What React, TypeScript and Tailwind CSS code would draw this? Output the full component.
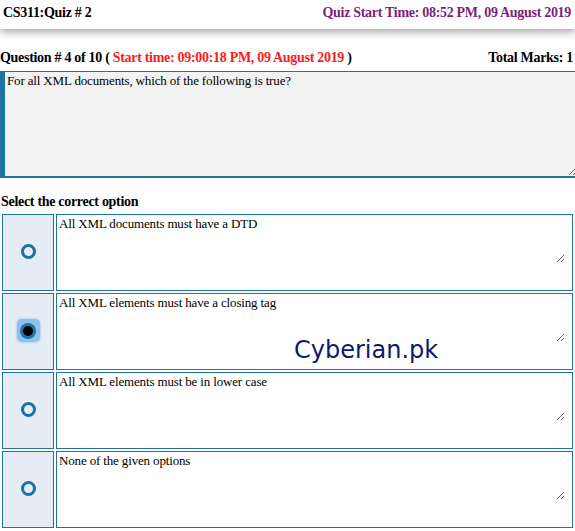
const OPTIONS = [
  "All XML documents must have a DTD",
  "All XML elements must have a closing tag",
  "All XML elements must be in lower case",
  "None of the given options",
];

const SELECTED = 1;

function Radio({ checked }: { checked: boolean }) {
  if (checked) {
    return (
      <div className="mb-[2px] flex h-[23px] w-[23px] items-center justify-center rounded-[5px] bg-[#8cc0ee] shadow-[0_0_2px_1px_#b5d6f5]">
        <div className="flex h-[16px] w-[16px] items-center justify-center rounded-full bg-[#1d74a0]">
          <div className="h-[10px] w-[10px] rounded-full bg-black" />
        </div>
      </div>
    );
  }
  return <div className="mb-[3px] h-[15px] w-[15px] rounded-full border-[3px] border-[#1d74a0]" />;
}

export default function App() {
  return (
    <div className="relative h-[531px] w-[575px] overflow-hidden bg-white font-['Liberation_Serif',serif] text-black">
      <header className="relative z-10 flex h-[29px] items-center justify-between bg-white pb-[4px] pl-[3px] pr-[4px] text-[14px] font-bold tracking-[-0.3px] shadow-[0_3px_8px_rgba(0,0,0,0.35)]">
        <span>CS311:Quiz # 2</span>
        <span className="text-[#7d1f7d]">Quiz Start Time: 08:52 PM, 09 August 2019</span>
      </header>

      <div className="mt-[19px] flex h-[20px] items-center justify-between pr-[2px] text-[14px] font-bold leading-[20px] tracking-[-0.3px]">
        <span>
          Question # 4 of 10 ( <span className="text-[#ff1a1a]">Start time: 09:00:18 PM, 09 August 2019</span> )
        </span>
        <span>Total Marks: 1</span>
      </div>

      <textarea
        readOnly
        value="For all XML documents, which of the following is true?"
        className="mt-[3px] block h-[107px] w-[577px] resize-y border-b-2 border-l-[5px] border-r-0 border-t border-[#1d74a0] bg-[#f2f2f2] pl-[2px] pt-[1px] text-[13px] leading-[16px] tracking-[-0.15px] outline-none"
      />

      <div className="mt-[16px] pl-[1px] text-[14px] font-bold leading-[16px] tracking-[-0.3px]">Select the correct option</div>

      <div className="mt-[4px] flex flex-col gap-[2px] pl-[2px]">
        {OPTIONS.map((text, i) => (
          <div key={text} className="flex h-[77px] gap-[2px]">
            <div className="flex w-[52px] items-center justify-center border border-[#1d74a0] bg-[#e6ecf5]">
              <Radio checked={i === SELECTED} />
            </div>
            <div className="w-[517px] border border-[#1d74a0] bg-white">
              <textarea
                readOnly
                value={text}
                className="block h-[48px] w-[508px] resize-y border-0 bg-transparent pl-[2px] pt-[1px] text-[13px] leading-[16px] tracking-[-0.15px] outline-none"
              />
            </div>
          </div>
        ))}
      </div>

      <div className="absolute left-[294px] top-[335px] font-['DejaVu_Sans',sans-serif] text-[24px] leading-[30px] text-[#0b1a6e]">
        Cyberian.pk
      </div>
    </div>
  );
}
